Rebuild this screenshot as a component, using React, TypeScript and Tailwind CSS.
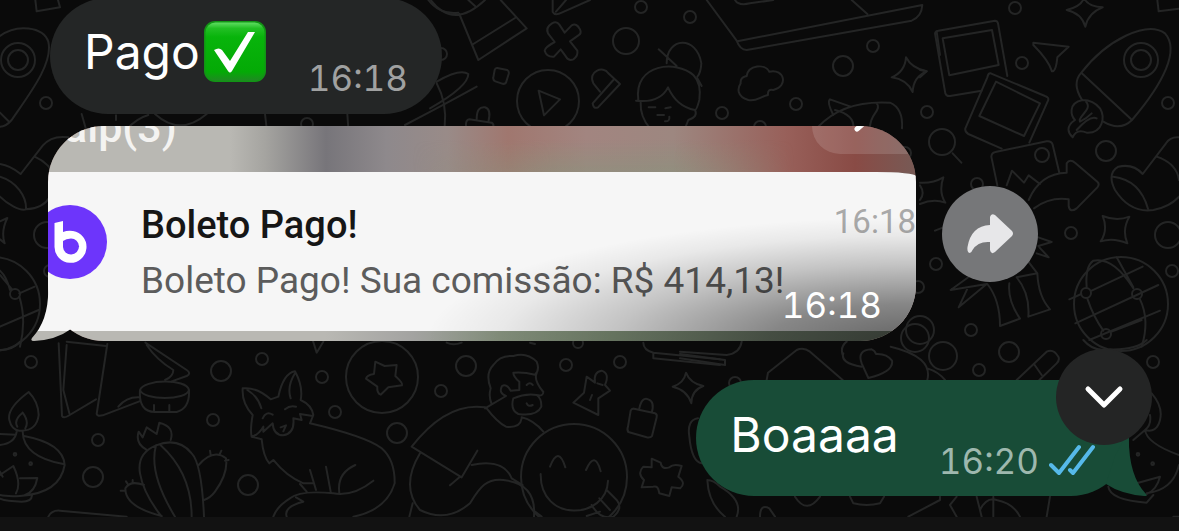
import React from "react";

type Dot = [number, number, number];

const dots: Dot[] = [
  [46, 103, 6], [641, 7, 6], [690, 17, 6], [873, 46, 6], [796, 104, 6], [722, 113, 6], [927, 112, 6],
  [626, 41, 13], [843, 66, 10], [760, 127, 6], [1015, 8, 6], [1022, 63, 6], [1168, 103, 6], [1106, 151, 10],
  [977, 184, 6], [1071, 233, 6], [1168, 235, 13], [936, 264, 6], [1172, 271, 6], [971, 330, 6], [918, 287, 6],
  [942, 142, 13], [915, 338, 14], [943, 356, 14], [1009, 352, 10], [979, 370, 6], [1153, 362, 6],
  [920, 330, 14], [31, 362, 6], [221, 371, 10], [262, 359, 6], [322, 377, 6], [213, 420, 6], [335, 412, 6],
  [98, 440, 6], [93, 477, 10], [248, 485, 10], [397, 433, 10], [382, 377, 36], [466, 366, 10], [441, 391, 6],
  [566, 365, 6], [620, 362, 6], [578, 343, 5], [574, 477, 53], [548, 101, 31], [441, 54, 6], [307, 124, 6],
  [1141, 60, 17], [1141, 60, 10], [18, 60, 17], [18, 60, 10], [47, 235, 13], [50, 271, 6], [1121, 304, 47],
  [1086, 293, 5], [1137, 294, 5], [1106, 334, 5], [-7, 304, 47], [15, 294, 5], [735, 383, 6], [905, 153, 6],
  [1042, 155, 7],
];

function Wallpaper() {
  return (
    <svg
      className="absolute inset-0 h-full w-full"
      viewBox="0 0 1179 531"
      preserveAspectRatio="xMidYMid slice"
      fill="none"
      stroke="#242525"
      strokeWidth="2"
      strokeLinecap="round"
      strokeLinejoin="round"
      aria-hidden="true"
    >
      {dots.map(([x, y, r], i) => (
        <circle key={i} cx={x} cy={y} r={r} />
      ))}
      <g strokeWidth="6">
        <g transform="scale(.33333)">
          <path d="M0 108C50 70 130 80 145 125C160 190 90 280 35 360Q18 380 0 380M0 338L28 366M106 0L110 34L180 22L174 0" />
          <path d="M0 492C20 495 35 500 62 522L128 437Q155 405 205 412M104 470Q150 490 168 535M0 530C50 545 80 590 78 628C60 635 20 610 0 590M78 628Q130 625 150 590" />
          <path d="M0 664L22 654Q2 695 14 730L0 718M0 812Q20 830 30 870M58 880L104 860M58 890Q80 960 60 1040M0 980L116 930M36 868L0 825" />
          <path d="M245 342L258 388M348 346V360M380 388Q410 355 445 345M465 342Q540 410 620 342M795 342L800 385M1042 342L1045 385M1215 375Q1340 310 1430 260M1285 0Q1320 45 1375 38" />
        </g>
        <g transform="translate(430 0) scale(.33333)">
          <path d="M2 0Q70 90 165 0M115 0L135 18M88 42L145 180L290 85L212 0M130 132L255 54M368 0V36Q375 48 395 38L480 0M378 35L408 0" />
          <path d="M366 70Q380 62 388 74L404 98L425 76Q440 68 450 88Q456 100 445 106L420 124L442 152Q445 168 430 178Q416 184 408 170L392 148L372 170Q350 172 344 152Q345 142 374 126L354 100Q346 82 366 70Z" />
          <path d="M202 204L232 210Q238 214 236 222L228 248Q224 254 214 250L196 244Q188 240 190 232L194 210Q196 203 202 204ZM326 272L390 298L342 346Z" />
          <path d="M108 380Q106 360 118 358L185 368Q192 372 190 380M140 358Q140 318 165 322Q185 328 175 366M20 245Q90 205 115 222C115 250 70 285 0 325M20 250Q52 310 44 380" />
          <path d="M490 250C472 215 520 195 535 220L570 252L504 322Q490 328 488 310L550 240M490 250L510 275" />
          <path d="M686 148L740 198M710 190C710 110 800 105 814 190Q812 220 802 230M625 300C610 190 740 180 790 225Q815 250 808 300Q800 330 795 330Q740 320 714 262Q690 310 618 302M632 308Q630 350 660 385M795 330Q805 350 775 360L765 385M802 235L815 258M656 322H676M706 325L722 322M682 345H702M718 350Q720 365 705 364" />
          <path d="M830 0L920 122Q930 150 950 150L1445 62Q1475 50 1477 15L922 124M1265 0L1312 42M915 0Q925 18 960 10L1030 0" />
          <path d="M932 250C930 230 945 230 950 228C955 195 1005 190 1018 215C1065 205 1075 260 1030 270Q1012 265 1014 285C990 290 980 305 955 300C920 290 922 265 932 250Z" />
          <path d="M1428 172Q1445 205 1490 214Q1450 230 1448 276Q1430 238 1385 232Q1425 215 1428 172ZM1165 380Q1240 300 1380 308Q1420 325 1416 385M1210 345Q1190 305 1200 298L1262 320M1215 330Q1275 345 1270 385M1340 310Q1350 320 1335 340T1320 385M1520 95L1530 165" />
        </g>
        <g transform="translate(920 0) scale(.33333)">
          <path d="M55 92L225 62Q232 62 234 70L262 228M45 100L76 280Q80 290 90 288L185 272M45 100Q48 92 55 92M68 115L216 90L236 195L88 226Z" />
          <path d="M212 220L375 288Q388 292 384 302L328 428M212 220Q205 218 202 232L136 385Q134 396 145 402L245 446M228 245L360 310L312 408L178 348Z" />
          <path d="M232 556L214 470Q215 458 226 456L380 424Q394 422 398 434L418 518M260 556L276 512L312 548L326 526L360 552M340 128L446 140L412 172Q408 215 396 214Q385 180 340 135Z" />
          <path d="M440 30Q482 20 492 -5Q505 20 548 22Q505 38 496 80Q485 40 440 30ZM712 0L716 34L777 26M0 210L20 214L0 232M98 460L124 488" />
          <path d="M484 218C560 120 680 60 735 100C780 150 730 250 636 360Q600 395 550 365M484 218Q455 250 485 298M484 218L636 360" />
          <path d="M488 300C440 310 455 350 465 360C435 380 445 400 458 412Q470 385 500 398C550 400 555 350 540 325Q520 300 488 300M498 305C520 330 470 350 480 365Q500 355 515 340M470 390Q510 345 530 355" />
          <path d="M326 600Q360 520 440 518V490Q450 476 465 488L532 545Q540 552 532 562L470 625Q450 640 446 618V598Q390 590 342 625" />
          <path d="M777 412Q750 410 738 430L668 522Q640 490 595 500Q560 520 585 570Q630 640 700 630Q750 620 777 590M710 470Q770 490 777 540M580 530Q660 540 684 626" />
          <path d="M548 648Q590 665 628 650Q605 690 622 730Q580 712 542 724Q565 690 548 648ZM0 548Q40 550 70 532Q55 575 76 608Q40 595 0 612M0 556Q16 580 0 600" />
          <path d="M45 692L70 682M150 828L92 870L200 852L116 922L144 862M202 852Q240 900 240 978L300 956Q262 900 268 850M290 832Q330 880 325 950L390 928Q355 890 352 820L290 832M325 785L352 820M355 712L395 726L355 738M350 760L386 772L358 742" />
          <path d="M500 862Q495 800 520 782Q580 770 640 865M448 898L484 882M515 872L668 800M466 970L715 855M508 1020L720 932M502 896Q520 950 550 992M660 898Q690 960 665 1040M590 772L640 862M575 995L665 960" />
        </g>
        <g transform="translate(680 340) scale(.33333)">
          <path d="M0 55L135 75V60L0 42M0 35L140 45Q180 40 185 5M260 120L264 98L350 30Q370 20 390 35L488 120M490 40Q480 70 545 80M500 5Q480 20 488 45M545 70Q530 30 575 28Q585 32 588 42Q620 40 636 62Q642 95 565 114ZM632 20Q760 50 742 120M742 85Q775 95 795 120" />
          <path d="M1010 120L1100 35Q1120 25 1135 50Q1140 60 1130 70L1078 120M1062 72L1085 105M1210 0Q1240 35 1280 28M1290 28Q1370 30 1400 0M1415 160Q1450 200 1440 240T1395 270L1360 300M1395 270Q1400 310 1497 345M1395 270Q1415 255 1410 225M1497 375Q1480 450 1400 460M1285 440Q1290 480 1400 488L1420 465M1370 430L1440 410Q1430 450 1400 462" />
          <circle cx="1374" cy="343" r="4" /><circle cx="1418" cy="371" r="4" />
          <path d="M18 98Q30 130 70 138Q35 150 34 190Q22 150 -22 140Q12 130 18 98ZM54 235Q20 240 28 290Q35 365 65 370M82 420Q85 490 135 530M82 420Q100 420 120 440Q190 480 170 530M345 470Q380 525 420 470M510 470L520 490Q560 500 600 490L612 470M240 530Q240 490 268 505L285 530M685 530L780 480V470M830 470L810 495L830 530M940 470V530M890 470L905 530M900 510Q920 470 950 480Q1000 490 1020 530M1110 470L1100 530M1480 530H1497" />
        </g>
        <g transform="translate(0 340) scale(.33333)">
          <path d="M86 156Q20 205 28 240Q35 270 58 272Q110 275 116 225Q115 185 86 156ZM68 218Q40 240 52 260M68 218Q88 245 76 265M50 275Q45 310 0 315M0 282L48 284M68 275Q70 350 190 372M72 288Q190 310 194 375Q180 460 60 468Q20 470 0 465M0 405L40 378Q65 430 48 460M0 395L8 410M60 415L112 414Q105 455 75 465M96 466Q95 485 65 485Q20 484 0 476M0 30Q40 30 60 5" />
          <circle cx="45" cy="343" r="4" /><circle cx="92" cy="371" r="4" />
          <path d="M176 10L186 228Q190 236 204 228L288 178M200 15L190 150L208 220M322 12L290 222Q292 230 308 226L418 184M200 5L318 18M355 200Q380 170 418 172M436 8L560 90Q575 100 560 108L515 124M440 15Q470 60 520 90Q520 110 495 120" />
          <path d="M420 150C430 118 560 115 567 150C560 182 430 182 420 150ZM420 150Q415 215 465 216H530Q570 205 567 150M462 195V214M508 195V214M145 530Q155 510 180 512L380 530" />
          <path d="M438 328Q405 310 416 275L428 292L440 262L470 282L478 248Q525 260 512 300M468 316Q535 290 575 340Q605 370 612 530M468 316Q410 340 420 400Q430 460 485 530M468 316Q445 400 525 530M482 316Q575 400 575 530M596 375Q640 325 678 355Q685 400 645 455Q630 475 612 480M632 345L630 332M658 345L664 332M675 362L686 360M432 435Q390 420 376 445Q375 500 485 528M382 430L378 424M398 430V420M372 452L362 452" />
          <path d="M728 145Q770 140 812 178L835 170Q850 100 885 94Q910 140 902 180Q935 195 940 225L930 250Q1100 290 1145 325Q1185 360 1184 430Q1160 510 1060 530M728 145Q725 190 758 225Q750 270 755 290L785 298Q790 350 808 370L820 360Q860 410 910 430H940M742 150Q775 170 784 205M885 100Q860 140 872 175M788 235Q798 212 818 224M855 208Q870 195 888 200M755 290Q775 285 790 260V275L818 250Q820 285 850 286Q885 280 880 235L905 240L900 222L938 228M842 262L858 256L850 274M930 390L948 450M978 380L992 455M1066 375Q1010 400 1018 458M1120 422Q1060 470 1000 460Q900 450 870 475Q830 500 820 530M900 432L920 455M860 530Q850 500 910 485L888 472M938 0L950 38L970 5" />
          <path d="M1126 65L1154 78L1190 75L1186 108Q1210 130 1206 136L1165 142L1142 164Q1130 160 1132 140L1098 116Q1100 105 1122 102Z" />
        </g>
        <g transform="translate(380 330) scale(.33333)">
          <path d="M332 175Q315 130 340 105Q360 75 400 78Q440 65 470 95Q480 120 465 134Q430 125 400 128Q400 140 418 155V180L392 182Q380 160 366 168Q355 190 378 198L315 235M332 175Q325 200 335 222M320 235Q350 275 378 290Q420 295 425 265M425 262Q460 270 490 305M470 130Q460 150 490 186Q490 200 470 195Q435 190 400 205Q390 240 415 252Q470 260 484 230Q485 205 470 195M440 165Q450 155 458 165M440 220Q445 232 458 225M315 232Q200 215 95 350L245 442L292 362M120 370Q60 470 120 540Q200 580 270 520C300 470 320 445 370 450Q470 460 462 560M240 440L210 466M275 405Q370 385 395 445L428 465M98 520L88 560M465 545L485 560" />
          <path d="M510 410Q535 345 556 412M618 420Q645 360 662 424M482 432C480 580 680 570 684 452M635 525Q660 570 700 560Q730 535 710 510L680 480M658 505L690 540M620 558L660 545" />
          <path d="M620 140L645 158Q640 125 665 122Q690 130 675 165L690 182L655 205V255L580 218L612 188ZM636 195L630 210M652 160L668 165M762 236L825 250Q832 252 830 262L816 318Q812 324 800 322L745 306Q740 300 744 290L752 242Q755 235 762 236ZM778 235Q785 200 805 208Q825 215 815 248" />
          <path d="M815 386L842 398Q845 420 868 412Q880 400 905 408L895 440Q920 460 900 475L875 472L868 498L838 490Q835 465 820 470L785 472L792 450Q770 430 790 410L815 412ZM790 38Q790 60 820 68V85L1020 105M820 68L1020 88M200 38Q220 48 245 38M450 38L465 42" />
        </g>
      </g>
    </svg>
  );
}

function CheckEmoji() {
  return (
    <svg className="size-[62px] shrink-0" viewBox="0 0 62 62" role="img" aria-label="Feito">
      <defs>
        <linearGradient id="emojiFace" x1="0" y1="0" x2="0" y2="1">
          <stop offset="0" stopColor="#5fdc62" />
          <stop offset=".1" stopColor="#22bf24" />
          <stop offset=".25" stopColor="#08b40b" />
          <stop offset=".85" stopColor="#04aa06" />
          <stop offset="1" stopColor="#1f8a22" />
        </linearGradient>
      </defs>
      <rect x="0" y="0" width="62" height="61" rx="11" fill="#129415" />
      <rect x="1.5" y="1.5" width="59" height="58" rx="10" fill="url(#emojiFace)" />
      <path d="M10 29Q15 26 18 29L26 40L44 11L51 11L28 50Q26 53 24 50Z" fill="#fff" />
    </svg>
  );
}

const bubbleText = "text-[48px] leading-[60px]";
const bubbleTime = "text-[35px] leading-[44px] tabular-nums";

export default function App() {
  return (
    <main className="relative flex min-h-screen flex-col overflow-hidden bg-[#0a0a0a] font-['Inter',sans-serif] text-white">
      <Wallpaper />

      <section className="relative flex flex-col pb-5" aria-label="Conversa">
        <article className="-mt-0.5 ml-[50px] flex h-[116px] items-center self-start rounded-full bg-[#242626] pl-[34px] pr-[34px]">
          <p className={`${bubbleText} mb-2 flex items-center gap-1`}>
            Pago
            <CheckEmoji />
          </p>
          <time className={`${bubbleTime} ml-[42px] mt-[44px] text-[#a0a1a1]`}>16:18</time>
        </article>

        <div className="ml-12 mt-3 flex items-center gap-[26px]">
          <article className="relative w-[868px] shrink">
            <div className="relative flex flex-col overflow-hidden rounded-[56px] bg-[#775a55] font-['Roboto',sans-serif]">
              <div className="relative flex h-[46px] justify-between overflow-hidden bg-[linear-gradient(90deg,#b9b8b3_0%,#b9b8b3_21%,#a5a4a0_25%,#77757a_32%,#8e898c_39%,#998b88_46%,#a0776f_53%,#a28580_62%,#9d8780_72%,#98605a_85%,#894b45_93%,#775a55_100%)]">
                <div className="absolute inset-0 bg-[linear-gradient(180deg,transparent_30%,#88957d88_100%)] [mask-image:linear-gradient(90deg,transparent_42%,#000_58%,#000_72%,transparent_86%)]" />
                <span className="relative -mt-6 ml-4 text-[43px] font-medium leading-[50px] text-[#f4f3f1]">aip(3)</span>
                <div className="relative h-7 w-[104px] rounded-bl-[28px] bg-[#ffffff22]">
                  <svg className="ml-10 h-2 w-5" viewBox="0 0 20 8" aria-hidden="true">
                    <path d="M5 3L12-3" stroke="#fff" strokeWidth="5" strokeLinecap="round" />
                  </svg>
                </div>
              </div>
              <div className="flex h-[159px] items-start rounded-tr-[40px_4px] bg-[#f6f6f6]">
                <span className="-ml-[15px] mt-[33px] size-[74px] shrink-0 rounded-full bg-[#6d35fb]">
                  <svg viewBox="0 0 74 74" className="size-full" role="img" aria-label="b">
                    <path d="M21.500 18L30 16V27Q35 25 40 26A16 16 0 1 1 21.500 42Z" fill="#fff" />
                    <path d="M30 42V36Q33 33.500 38 33.500A8 8 0 1 1 30 42Z" fill="#6d35fb" />
                  </svg>
                </span>
                <div className="ml-[34px] mt-[29px] flex min-w-0 flex-1 flex-col gap-2">
                  <div className="flex justify-between">
                    <h2 className="whitespace-nowrap text-[38px] font-medium leading-[48px] text-[#161616]">Boleto Pago!</h2>
                    <time className="text-[33px] leading-[42px] text-[#a9a9a9]">16:18</time>
                  </div>
                  <p className="whitespace-nowrap text-[37px] leading-[48px] text-[#5c5c5c]">
                    Boleto Pago! Sua comissão: R$ 414,13!
                  </p>
                </div>
              </div>
              <div className="h-2.5 bg-[linear-gradient(90deg,#b9b8b3_0%,#b9b8b3_32%,#a3a3a1_42%,#87937f_52%,#7f9077_65%,#7c8a7a_100%)]" />
              <div className="absolute inset-0 bg-[radial-gradient(ellipse_490px_124px_at_100%_100%,#00000098_0%,#00000074_30%,#00000034_62%,#0000000e_85%,transparent_100%)]" />
            </div>
            <svg className="absolute -left-[17px] bottom-0 h-[61px] w-[42px]" viewBox="0 0 42 61" aria-hidden="true">
              <defs>
                <linearGradient id="tailFill" gradientUnits="userSpaceOnUse" x1="0" y1="0" x2="0" y2="61">
                  <stop offset=".83" stopColor="#f6f6f6" />
                  <stop offset=".84" stopColor="#b9b8b3" />
                </linearGradient>
              </defs>
              <path d="M17 4Q19 39 1 58Q-1 61 3 61Q25 60 40 49L28 28L18 4Z" fill="url(#tailFill)" />
            </svg>
            <time className={`${bubbleTime} absolute bottom-[14px] right-[34px] text-white`}>16:18</time>
          </article>
          <button type="button" aria-label="Encaminhar" className="grid size-24 shrink-0 place-items-center rounded-full bg-[#767779]">
            <svg className="h-10 w-[46px]" viewBox="0 0 46 40" fill="#e7e7e9" aria-hidden="true">
              <path d="M23 11V3Q24-1 28 1L45 17Q47 19.500 45 22L28 38Q24 41 23 36V28Q11 27 5.500 36Q4 40 1.500 38.500Q0 37.500 .5 33Q4 12 23 11Z" />
            </svg>
          </button>
        </div>

        <div className="relative mr-[50px] mt-[39px] flex self-end">
          <article className="flex h-[116px] items-center rounded-full bg-[#184c37] pl-[34px] pr-[34px]">
            <p className={`${bubbleText} mb-1.5`}>Boaaaa</p>
            <time className={`${bubbleTime} ml-10 mt-[46px] text-[#9eb8ae]`}>16:20</time>
            <svg
              className="ml-2.5 mt-11 h-8 w-[46px]"
              viewBox="0 0 46 32"
              fill="none"
              stroke="#56b9e9"
              strokeWidth="4"
              strokeLinecap="round"
              strokeLinejoin="round"
              role="img"
              aria-label="Lida"
            >
              <path d="M2 21L10 29L30 3M21 26L24 29L44 3" />
            </svg>
          </article>
          <svg className="absolute -right-[18px] bottom-0 h-[70px] w-[42px]" viewBox="0 0 42 70" aria-hidden="true">
            <path d="M24 4Q22 48 41 68Q43 71 39 70Q16 68 1 58L10 30Z" fill="#184c37" />
          </svg>
          <button
            type="button"
            aria-label="Ir para o fim"
            className="absolute -right-[23px] -top-[31px] grid size-24 place-items-center rounded-full bg-[#242525]"
          >
            <svg className="h-6 w-10" viewBox="0 0 40 24" fill="none" stroke="#fff" strokeWidth="5" strokeLinecap="round" strokeLinejoin="round" aria-hidden="true">
              <path d="M4 4L20 20L36 4" />
            </svg>
          </button>
        </div>
      </section>

      <footer className="relative mt-auto h-3.5 bg-[#121212]" />
    </main>
  );
}
